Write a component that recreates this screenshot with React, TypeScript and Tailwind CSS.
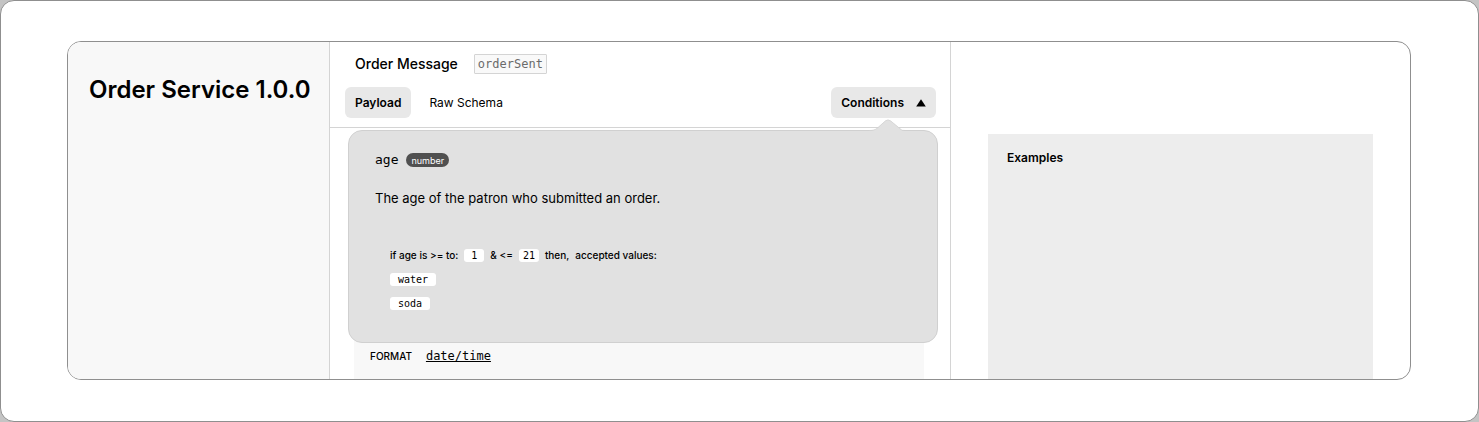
import type { ReactNode } from "react";

const mono = "font-['DejaVu_Sans_Mono','Liberation_Mono',monospace]";

function Chip({ children, className = "" }: { children: ReactNode; className?: string }) {
  return (
    <code className={`flex h-[13px] items-center justify-center rounded-[3px] bg-white pt-[2px] text-[10px] leading-none ${mono} ${className}`}>
      {children}
    </code>
  );
}

export default function App() {
  return (
    <div className="bg-[#c4c4c4] font-[Inter,sans-serif] text-black">
      <div className="rounded-[14px] border border-[#8f8f8f] bg-white pt-10 pr-[67px] pb-[41px] pl-[66px]">
        <div className="grid grid-cols-[262px_621fr_459fr] overflow-hidden rounded-[14px] border border-[#8f8f8f]">
          <aside className="border-r border-[#d4d4d4] bg-[#f8f8f8] pt-8 pl-[21px]">
            <h1 className="text-[24px] leading-8 font-semibold whitespace-nowrap">Order Service 1.0.0</h1>
          </aside>

          <main className="border-r border-[#d4d4d4]">
            <header className="border-b border-[#d4d4d4] pt-3 pr-[14px] pb-[9px] pl-[15px]">
              <div className="flex h-5 items-center gap-4 pl-[10px]">
                <h2 className="text-[14px] leading-5 font-medium">Order Message</h2>
                <code className={`flex h-5 items-center rounded-[1px] border border-[#d4d4d4] bg-[#f9f9f9] px-[3px] text-[12px] leading-none text-[#6b6b6b] ${mono}`}>
                  orderSent
                </code>
              </div>
              <div className="mt-[13px] flex h-[31px] items-center">
                <button type="button" className="h-full rounded-[6px] bg-[#e8e8e8] px-[10px] text-[12px] font-semibold">
                  Payload
                </button>
                <button type="button" className="ml-2 h-full px-[10px] text-[12px]">
                  Raw Schema
                </button>
                <button type="button" aria-expanded="true" className="ml-auto flex h-full items-center gap-3 rounded-[6px] bg-[#e8e8e8] px-[10px] text-[12px] font-semibold">
                  Conditions
                  <svg width="10" height="8" viewBox="0 0 10 8" aria-hidden="true">
                    <path d="M5 0.2 9.8 7.5H0.2Z" fill="#000" />
                  </svg>
                </button>
              </div>
            </header>

            <section className="relative z-10 mt-[2px] mr-3 ml-[18px] rounded-[14px] border border-[#d0d0d0] bg-[#e1e1e1] px-[26px] pt-[19px] pb-[27px]">
              <svg className="absolute -top-3 right-[32px]" width="36" height="13" viewBox="0 0 36 13" aria-hidden="true">
                <path d="M0 13V11.6C4 11.6 6 11 8.5 9L16.500 1.8Q19 0 21.500 1.8L33 11.3L36 12V13Z" fill="#e1e1e1" />
                <path d="M0 11.5C4 11.5 6 11 8.5 9L16.500 1.8Q19 0 21.500 1.8L33 11.3L36 11.5" fill="none" stroke="#d0d0d0" strokeWidth="0.8" />
              </svg>
              <div className="flex h-5 items-center gap-2">
                <h3 className={`text-[13px] leading-5 ${mono}`}>age</h3>
                <span className="flex h-[14px] items-center rounded-full bg-[#505050] px-[5px] text-[9px] leading-none text-white">number</span>
              </div>
              <p className="mt-[18px] text-[13px] leading-5">The age of the patron who submitted an order.</p>
              <div className="mt-[35px] pl-[15px] text-[10px] font-medium">
                <div className="flex h-6 items-center gap-[6px]">
                  <span>if age is &gt;= to:</span>
                  <Chip className="w-5">1</Chip>
                  <span>&amp; &lt;=</span>
                  <Chip className="w-5">21</Chip>
                  <span>then,</span>
                  <span>accepted values:</span>
                </div>
                <ul>
                  <li className="flex h-6 items-center"><Chip className="px-2">water</Chip></li>
                  <li className="flex h-6 items-center"><Chip className="px-2">soda</Chip></li>
                </ul>
              </div>
            </section>

            <div className="-mt-3 mr-[26px] ml-6 flex items-center gap-[14px] bg-[#f8f8f8] pt-[15px] pb-[13px] pl-4">
              <span className="text-[10px] leading-5 font-medium">FORMAT</span>
              <a href="#format" className={`text-[12px] leading-5 underline ${mono}`}>date/time</a>
            </div>
          </main>

          <aside className="flex pt-[92px] pr-[37px] pl-[37px]">
            <section className="grow bg-[#ededed] px-[19px] pt-[14px]">
              <h2 className="text-[12px] leading-5 font-semibold">Examples</h2>
            </section>
          </aside>
        </div>
      </div>
    </div>
  );
}
